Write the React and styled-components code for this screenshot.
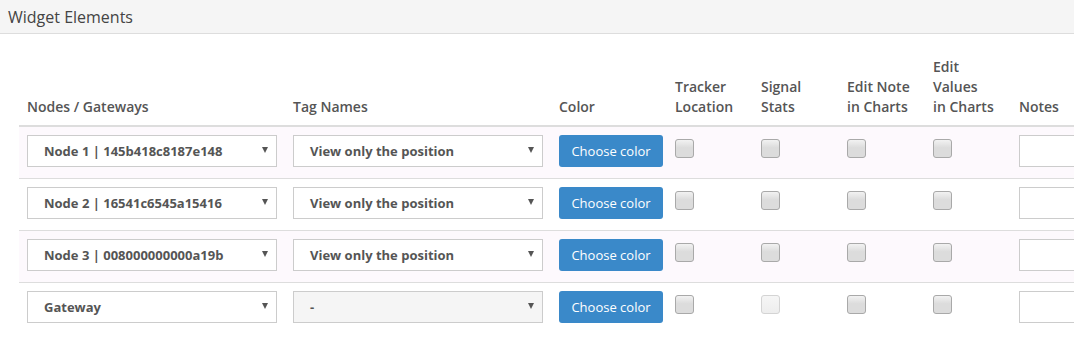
import React from 'react'
import styled, { createGlobalStyle } from 'styled-components'

const GlobalStyle = createGlobalStyle`
body{
margin:0;
background:#fff;
font-family:"Open Sans", "Liberation Sans", sans-serif;
overflow:hidden;
}
`

const Heading = styled.div`
height:33px;
background:#f5f5f5;
border-bottom:solid 1px #dddddd;
padding-left:8px;
display:flex;
align-items:center;
font-size:16px;
color:#444;
`

const Body = styled.div`
padding:15px 0 0 19px;
`

const Table = styled.table`
border-collapse:collapse;
border-spacing:0;
table-layout:fixed;
width:1200px;
`

const Th = styled.th`
width:${p => p.w}px;
box-sizing:border-box;
padding:8px;
text-align:left;
vertical-align:bottom;
font-size:14px;
line-height:20px;
font-weight:600;
color:#555;
border-bottom:solid 2px #dddddd;
`

const Row = styled.tr`
background:${p => p.striped ? '#fdf9fd' : '#fff'};
& td{ border-top:solid 1px #dddddd; }
&:first-child td{ border-top:none; }
`

const Td = styled.td`
padding:8px 8px 11px;
vertical-align:top;
`

const Select = styled.div`
width:250px;
height:32px;
box-sizing:border-box;
border:solid 1px #cccccc;
background:${p => p.disabled ? '#f5f5f5' : '#fff'};
display:flex;
align-items:center;
padding:0 8px 0 16px;
font-size:13px;
font-weight:700;
color:#555;
`

const Caret = styled.span`
margin-left:auto;
margin-top:-2px;
width:0;
height:0;
border-left:3px solid transparent;
border-right:3px solid transparent;
border-top:6px solid #555;
`

const ColorButton = styled.button`
width:104px;
height:32px;
border:none;
border-radius:3px;
background:#3a89c9;
color:#fff;
font-family:"Open Sans", "Liberation Sans", sans-serif;
font-size:13px;
padding:0;
`

const Check = styled.div`
width:19px;
height:19px;
box-sizing:border-box;
margin-top:4px;
border-radius:3px;
border:solid 1px ${p => p.disabled ? '#d4d4d4' : '#a9a9a9'};
background:${p => p.disabled
    ? 'linear-gradient(#f6f6f6, #ededed)'
    : 'linear-gradient(#f2f2f2, #dcdcdc 45%, #dcdcdc)'};
`

const NoteInput = styled.input`
width:160px;
height:32px;
box-sizing:border-box;
border:solid 1px #cccccc;
background:#fff;
`

const rows = [
    { node: 'Node 1 | 145b418c8187e148', tag: 'View only the position' },
    { node: 'Node 2 | 16541c6545a15416', tag: 'View only the position' },
    { node: 'Node 3 | 008000000000a19b', tag: 'View only the position' },
    { node: 'Gateway', tag: '-', gateway: true },
]

function App() {
    const mapRows = rows.map((r, i) => (
        <Row key={i} striped={i % 2 === 0}>
            <Td><Select>{r.node}<Caret /></Select></Td>
            <Td><Select disabled={r.gateway}>{r.tag}<Caret /></Select></Td>
            <Td><ColorButton>Choose color</ColorButton></Td>
            <Td><Check /></Td>
            <Td><Check disabled={r.gateway} /></Td>
            <Td><Check /></Td>
            <Td><Check /></Td>
            <Td><NoteInput /></Td>
        </Row>
    ))

    return (
        <div>
            <GlobalStyle />
            <Heading>Widget Elements</Heading>
            <Body>
                <Table>
                    <thead>
                        <tr>
                            <Th w={266}>Nodes / Gateways</Th>
                            <Th w={266}>Tag Names</Th>
                            <Th w={116}>Color</Th>
                            <Th w={86}>Tracker<br />Location</Th>
                            <Th w={86}>Signal<br />Stats</Th>
                            <Th w={86}>Edit Note<br />in Charts</Th>
                            <Th w={86}>Edit<br />Values<br />in Charts</Th>
                            <Th w={208}>Notes</Th>
                        </tr>
                    </thead>
                    <tbody>{mapRows}</tbody>
                </Table>
            </Body>
        </div>
    )
}

export default App
